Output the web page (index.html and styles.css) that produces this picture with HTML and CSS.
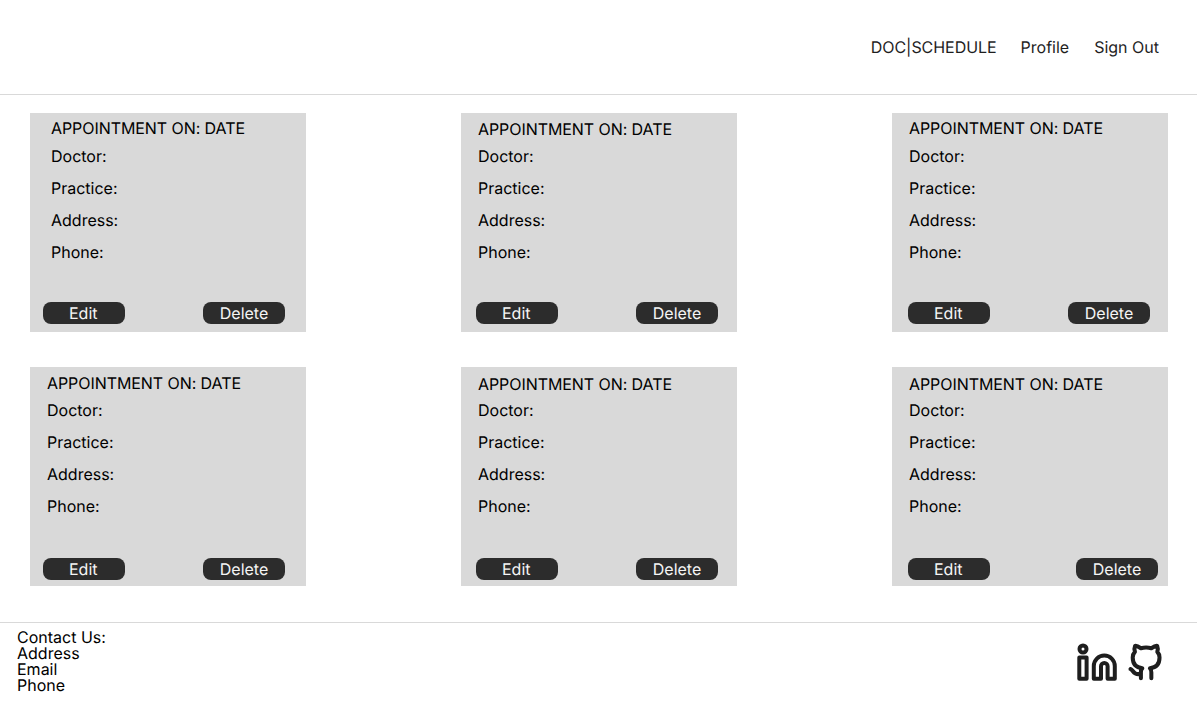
FILE: index.html
```
<!DOCTYPE html>
<html lang="en">
<head>
<meta charset="utf-8">
<title>DOC|SCHEDULE</title>
<link rel="stylesheet" href="styles.css">
</head>
<body>
<header class="header">
  <nav class="nav">
    <a class="nav-brand">DOC|SCHEDULE</a>
    <a class="nav-profile">Profile</a>
    <a>Sign Out</a>
  </nav>
</header>
<main class="cards">
  <article class="card card-inset">
    <h2>APPOINTMENT ON: DATE</h2>
    <ul><li>Doctor:</li><li>Practice:</li><li>Address:</li><li>Phone:</li></ul>
    <div class="actions"><button class="edit">Edit</button><button>Delete</button></div>
  </article>
  <article class="card card-low actions-mid">
    <h2>APPOINTMENT ON: DATE</h2>
    <ul><li>Doctor:</li><li>Practice:</li><li>Address:</li><li>Phone:</li></ul>
    <div class="actions"><button class="edit">Edit</button><button>Delete</button></div>
  </article>
  <article class="card actions-end">
    <h2>APPOINTMENT ON: DATE</h2>
    <ul><li>Doctor:</li><li>Practice:</li><li>Address:</li><li>Phone:</li></ul>
    <div class="actions"><button class="edit">Edit</button><button>Delete</button></div>
  </article>
  <article class="card card-second">
    <h2>APPOINTMENT ON: DATE</h2>
    <ul><li>Doctor:</li><li>Practice:</li><li>Address:</li><li>Phone:</li></ul>
    <div class="actions"><button class="edit">Edit</button><button>Delete</button></div>
  </article>
  <article class="card card-second card-lower actions-mid">
    <h2>APPOINTMENT ON: DATE</h2>
    <ul><li>Doctor:</li><li>Practice:</li><li>Address:</li><li>Phone:</li></ul>
    <div class="actions"><button class="edit">Edit</button><button>Delete</button></div>
  </article>
  <article class="card card-second card-lower actions-wide">
    <h2>APPOINTMENT ON: DATE</h2>
    <ul><li>Doctor:</li><li>Practice:</li><li>Address:</li><li>Phone:</li></ul>
    <div class="actions"><button class="edit">Edit</button><button>Delete</button></div>
  </article>
</main>
<footer class="footer">
  <address class="contact">
    <span>Contact Us:</span>
    <span>Address</span>
    <span>Email</span>
    <span>Phone</span>
  </address>
  <div class="social">
    <svg class="linkedin" viewBox="0 0 42 40" aria-label="LinkedIn">
      <circle cx="7" cy="7" r="3.5"/>
      <path d="M3.3 15.500h7.300v21.300H3.300zM17.800 36.800V24.100a10.500 10.500 0 0 1 21 0v12.700h-7.200V24.300a3.300 3.300 0 0 0-6.600 0v12.500z"/>
    </svg>
    <svg class="github" viewBox="0 0 36 40" aria-label="GitHub">
      <path transform="translate(1.5 2.4) scale(1.49 1.54)" d="M9 19c-5 1.500-5-2.500-7-3m14 6v-3.870a3.370 3.370 0 0 0-.940-2.610c3.140-.350 6.440-1.540 6.440-7A5.440 5.440 0 0 0 20 4.770 5.070 5.070 0 0 0 19.910 1S18.730.650 16 2.480a13.380 13.380 0 0 0-7 0C6.270.650 5.090 1 5.090 1A5.070 5.070 0 0 0 5 4.770a5.440 5.440 0 0 0-1.500 3.780c0 5.420 3.300 6.610 6.440 7A3.370 3.370 0 0 0 9 18.130V22"/>
    </svg>
  </div>
</footer>
</body>
</html>
```
FILE: styles.css
```
* { box-sizing: border-box; }
body {
  margin: 0;
  height: 702px;
  overflow: hidden;
  display: flex;
  flex-direction: column;
  background: #fff;
  color: #000;
  font: 400 16px/16px Inter, sans-serif;
  text-rendering: geometricPrecision;
}
.header {
  height: 95px;
  flex: none;
  border-bottom: 1px solid #d9d9d9;
  display: flex;
  align-items: center;
  justify-content: flex-end;
  padding-right: 38px;
}
.nav { display: flex; color: #1e1e1e; }
.nav-brand { margin-right: 24px; letter-spacing: -0.05px; }
.nav-profile { margin-right: 25px; }
.cards {
  height: 527px;
  flex: none;
  padding: 18px 29px 0 30px;
  display: grid;
  grid-template-columns: repeat(3, 276px);
  grid-template-rows: repeat(2, 219px);
  row-gap: 35px;
  justify-content: space-between;
}
.card {
  background: #d9d9d9;
  display: flex;
  flex-direction: column;
  padding: 7px 21px 8px 17px;
}
.card h2 {
  margin: 0;
  height: 28px;
  font: inherit;
  line-height: 16px;
  letter-spacing: -0.07px;
}
.card ul {
  list-style: none;
  margin: 0;
  padding: 0;
  display: flex;
  flex-direction: column;
  gap: 16px;
}
.card-inset h2, .card-inset ul { padding-left: 4px; }
.card-low { padding-top: 8px; }
.card-low h2 { height: 27px; }
.card-second { padding-top: 8px; padding-bottom: 6px; }
.card-second h2 { height: 27px; }
.card-lower { padding-top: 9px; }
.card-lower h2 { height: 26px; }
.actions {
  display: flex;
  gap: 78px;
  margin: auto 0 0 -4px;
}
.actions-mid .actions { margin-left: -2px; }
.actions-end .actions { margin-left: -1px; }
.actions-wide .actions { margin-left: -1px; gap: 86px; }
.actions-wide { padding-right: 9px; }
.actions button {
  width: 82px;
  height: 22px;
  flex: none;
  padding: 0;
  border: 0;
  border-radius: 8px;
  background: #2c2c2c;
  color: #f5f5f5;
  font: inherit;
  text-rendering: inherit;
}
.actions .edit { padding-right: 1.5px; }
.footer {
  flex: 1;
  border-top: 1px solid #d9d9d9;
  display: flex;
  justify-content: space-between;
  padding: 6px 35px 0 17px;
}
.contact { display: flex; flex-direction: column; font-style: normal; }
.social { display: flex; gap: 8px; padding-top: 13px; }
.social svg {
  fill: none;
  stroke: #1e1e1e;
  stroke-width: 4;
  stroke-linecap: round;
  stroke-linejoin: round;
}
.linkedin { width: 42px; height: 40px; }
.social .github { width: 36px; height: 40px; stroke-width: 2.7; }
```
